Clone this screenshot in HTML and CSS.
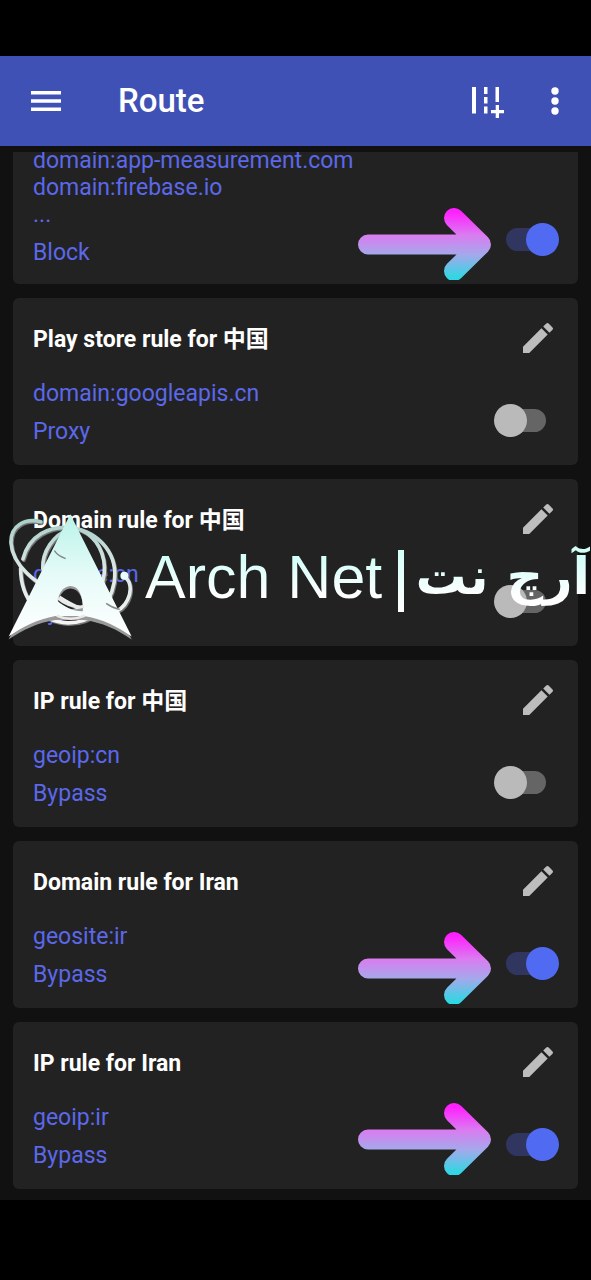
FILE: index.html
```html
<!DOCTYPE html>
<html lang="en">
<head>
<meta charset="utf-8">
<meta name="viewport" content="width=device-width, initial-scale=1">
<title>Route</title>
<link rel="stylesheet" href="styles.css">
</head>
<body>
<svg class="defs" aria-hidden="true">
  <defs>
    <linearGradient id="neon" gradientUnits="userSpaceOnUse" x1="0" y1="4" x2="0" y2="70">
      <stop offset="0" stop-color="#ff20ff"/>
      <stop offset=".35" stop-color="#da7cf0"/>
      <stop offset=".65" stop-color="#a4a9eb"/>
      <stop offset="1" stop-color="#2ed8e3"/>
    </linearGradient>
    <symbol id="pencil" viewBox="0 0 24 24"><path d="M3 17.250V21h3.750L17.810 9.940l-3.750-3.750L3 17.250zM20.710 7.040a1 1 0 0 0 0-1.410l-2.340-2.340a1 1 0 0 0-1.410 0l-1.830 1.830 3.750 3.750 1.830-1.830z"/></symbol>
    <symbol id="arrow" viewBox="0 0 133 72"><path d="M10 36.500H120M96 10l27 26.500L96 63" fill="none" stroke="url(#neon)" stroke-width="20" stroke-linecap="round" stroke-linejoin="round"/></symbol>
  </defs>
</svg>
<header class="bar">
  <button class="icon-button menu" aria-label="Menu">
    <svg width="30" height="20" viewBox="0 0 30 20"><path d="M0 0h30v3.500H0zM0 8.300h30v3.500H0zM0 16.500h30V20H0z"/></svg>
  </button>
  <h1 class="bar-title">Route</h1>
  <button class="icon-button" aria-label="Add route">
    <svg width="32" height="36" viewBox="0 -4 32 36"><path d="M0 0h4v26.500H0zM12 0h3.500v7H12zM12 10h3.500v6.500H12zM12 19.500h3.500v7H12zM23.500 0h3.500v15h-3.500zM23.700 18h3.300v5H32v3.200h-5V31h-3.300v-4.800H19V23h4.700z"/></svg>
  </button>
  <button class="icon-button more" aria-label="More options">
    <svg width="8" height="28" viewBox="0 0 8 28"><circle cx="4" cy="4" r="3.700"/><circle cx="4" cy="14" r="3.700"/><circle cx="4" cy="24" r="3.700"/></svg>
  </button>
</header>
<main class="list">
  <article class="card card-clipped">
    <div class="info">
      <p class="domains">domain:app-measurement.com<br>domain:firebase.io<br>...</p>
      <p class="target">Block</p>
    </div>
    <div class="actions"><input class="switch" type="checkbox" aria-label="Block rule" checked></div>
    <svg class="arrow"><use href="#arrow"/></svg>
  </article>
  <article class="card">
    <div class="info">
      <h2 class="name"><label for="s2">Play store rule for 中国</label></h2>
      <p class="domains">domain:googleapis.cn</p>
      <p class="target">Proxy</p>
    </div>
    <div class="actions">
      <button class="icon-button edit" aria-label="Edit"><svg width="40" height="40"><use href="#pencil"/></svg></button>
      <input class="switch" type="checkbox" id="s2">
    </div>
  </article>
  <article class="card">
    <div class="info">
      <h2 class="name"><label for="s3">Domain rule for 中国</label></h2>
      <p class="domains">geosite:cn</p>
      <p class="target">Bypass</p>
    </div>
    <div class="actions">
      <button class="icon-button edit" aria-label="Edit"><svg width="40" height="40"><use href="#pencil"/></svg></button>
      <input class="switch" type="checkbox" id="s3">
    </div>
    <div class="watermark">
      <svg class="logo" width="126" height="128" viewBox="20 40 380 385">
        <defs><linearGradient id="ice" x1="0" y1="0" x2="0" y2="1"><stop offset="0" stop-color="#b9f3e9"/><stop offset=".5" stop-color="#e6fbf8"/><stop offset="1" stop-color="#fff"/></linearGradient>
        <linearGradient id="ring" gradientUnits="userSpaceOnUse" x1="0" y1="60" x2="0" y2="370"><stop offset="0" stop-color="#a9cfc9"/><stop offset=".5" stop-color="#dce8e7"/><stop offset="1" stop-color="#f4f4f4"/></linearGradient></defs>
        <g fill="none" stroke-linecap="round" stroke-width="11">
          <g stroke="#777" transform="translate(3 4)">
            <path d="M122 66C75 54 30 76 32 130C36 200 108 248 172 290C225 325 285 352 335 341C383 329 399 278 388 248C382 234 371 229 374 229"/>
            <path d="M68 178C86 108 148 76 214 84C305 97 356 170 343 249C329 330 270 370 204 371C120 367 61 300 61 207"/>
            <path d="M206 88C161 106 125 155 128 208M244 91C291 112 319 165 313 224C306 292 250 338 176 345"/>
          </g>
          <g stroke="url(#ring)">
            <path d="M122 66C75 54 30 76 32 130C36 200 108 248 172 290C225 325 285 352 335 341C383 329 399 278 388 248C382 234 371 229 374 229"/>
            <path d="M68 178C86 108 148 76 214 84C305 97 356 170 343 249C329 330 270 370 204 371C120 367 61 300 61 207"/>
            <path d="M206 88C161 106 125 155 128 208M244 91C291 112 319 165 313 224C306 292 250 338 176 345"/>
          </g>
        </g>
        <path transform="translate(0 7)" fill="#999" fill-rule="evenodd" d="M211 43L396 414C354 384 306 362 252 355H166C112 363 68 385 25 414ZM173 309C205 324 230 325 249 319C250 286 235 260 211 260C190 261 175 282 173 309Z"/>
        <path fill="url(#ice)" fill-rule="evenodd" d="M211 43L396 412C354 382 306 358 252 350H166C112 360 68 382 25 412ZM173 305C190 322 225 338 249 336C250 286 235 260 211 260C190 261 175 282 173 305Z"/>
        <path d="M163 153Q172 168 197 177Q174 170 163 153M319 312Q338 326 360 330" fill="none" stroke="#888" stroke-width="4"/>
        <path d="M173 296C190 312 218 324 252 322M170 349Q210 368 255 349" fill="none" stroke="#e9e9e9" stroke-width="8"/>
        <circle cx="374" cy="229" r="12" fill="#e9fffb"/>
      </svg>
      <span class="brand">Arch Net</span>
      <span class="divider"></span>
      <span class="brand brand-fa" lang="fa" dir="rtl">آرچ نت</span>
    </div>
  </article>
  <article class="card">
    <div class="info">
      <h2 class="name"><label for="s4">IP rule for 中国</label></h2>
      <p class="domains">geoip:cn</p>
      <p class="target">Bypass</p>
    </div>
    <div class="actions">
      <button class="icon-button edit" aria-label="Edit"><svg width="40" height="40"><use href="#pencil"/></svg></button>
      <input class="switch" type="checkbox" id="s4">
    </div>
  </article>
  <article class="card">
    <div class="info">
      <h2 class="name"><label for="s5">Domain rule for Iran</label></h2>
      <p class="domains">geosite:ir</p>
      <p class="target">Bypass</p>
    </div>
    <div class="actions">
      <button class="icon-button edit" aria-label="Edit"><svg width="40" height="40"><use href="#pencil"/></svg></button>
      <input class="switch" type="checkbox" id="s5" checked>
    </div>
    <svg class="arrow"><use href="#arrow"/></svg>
  </article>
  <article class="card">
    <div class="info">
      <h2 class="name"><label for="s6">IP rule for Iran</label></h2>
      <p class="domains">geoip:ir</p>
      <p class="target">Bypass</p>
    </div>
    <div class="actions">
      <button class="icon-button edit" aria-label="Edit"><svg width="40" height="40"><use href="#pencil"/></svg></button>
      <input class="switch" type="checkbox" id="s6" checked>
    </div>
    <svg class="arrow arrow-raised"><use href="#arrow"/></svg>
  </article>
</main>
</body>
</html>
```
FILE: styles.css
```css
* { box-sizing: border-box; }
body {
  margin: 0;
  padding: 56px 0 80px;
  background: #000;
  color: #fff;
  font-family: Roboto, "Noto Sans CJK SC", sans-serif;
  overflow-x: hidden;
}
h1, h2, p { margin: 0; }
.defs { position: absolute; width: 0; height: 0; }

.bar {
  display: flex;
  align-items: center;
  height: 90px;
  padding: 0 32px 0 31px;
  background: #3f51b5;
}
.bar-title {
  flex: 1;
  padding-left: 57px;
  font-size: 33px;
  font-weight: 500;
  line-height: 40px;
}
.icon-button {
  display: flex;
  padding: 0;
  border: 0;
  background: none;
  fill: #fff;
}
.more { margin-left: 47px; }

.list {
  display: flex;
  flex-direction: column;
  gap: 14px;
  padding: 6px 13px 11px;
  background: #111;
}
.card {
  position: relative;
  display: flex;
  justify-content: space-between;
  padding: 20px 19px 20px 20px;
  border-radius: 6px;
  background: #222;
}
.name {
  height: 38px;
  margin-bottom: 24px;
  padding-top: 4px;
  font-size: 23px;
  font-weight: 700;
  line-height: 36px;
}
.domains, .target {
  color: #5b68ea;
  font-size: 23px;
  line-height: 27px;
}
.target { margin-top: 11px; }
.actions {
  display: flex;
  flex-direction: column;
  justify-content: space-between;
  align-items: flex-end;
  padding-bottom: 8px;
}
.edit {
  margin-right: 1px;
  fill: #bdbdbd;
}
.card-clipped {
  padding-top: 0;
  padding-bottom: 18px;
  border-radius: 0 0 6px 6px;
  overflow: hidden;
}
.card-clipped .domains { margin-top: -5px; }
.card-clipped .actions {
  justify-content: flex-end;
  padding-bottom: 10px;
}

.switch {
  appearance: none;
  position: relative;
  width: 65px;
  height: 33px;
  margin: 0;
}
.switch::before {
  content: "";
  position: absolute;
  left: 12px;
  top: 5px;
  width: 40px;
  height: 23px;
  border-radius: 12px;
  background: #656565;
}
.switch::after {
  content: "";
  position: absolute;
  left: 0;
  top: 0;
  width: 33px;
  height: 33px;
  border-radius: 50%;
  background: #bababa;
}
.switch:checked::before { background: #30365f; }
.switch:checked::after { left: 32px; background: #506af2; }

.arrow {
  position: absolute;
  right: 87px;
  bottom: 4px;
  width: 133px;
  height: 72px;
}
.arrow-raised { bottom: 14px; }

.watermark {
  position: absolute;
  left: -6px;
  right: -12px;
  top: 34px;
  display: flex;
  align-items: center;
  pointer-events: none;
}
.brand {
  margin-left: 12px;
  font-family: "Liberation Sans", sans-serif;
  font-size: 61px;
  line-height: 80px;
  white-space: nowrap;
  color: transparent;
  background: linear-gradient(#cffff7 20%, #fff 75%);
  background-clip: text;
  -webkit-background-clip: text;
}
.divider {
  width: 6px;
  height: 62px;
  margin-left: 16px;
  margin-top: 8px;
  background: linear-gradient(#d5fff8, #fff);
}
.brand-fa {
  margin-left: auto;
  font-family: "DejaVu Sans", sans-serif;
  font-size: 51px;
  font-weight: 700;
}
```
